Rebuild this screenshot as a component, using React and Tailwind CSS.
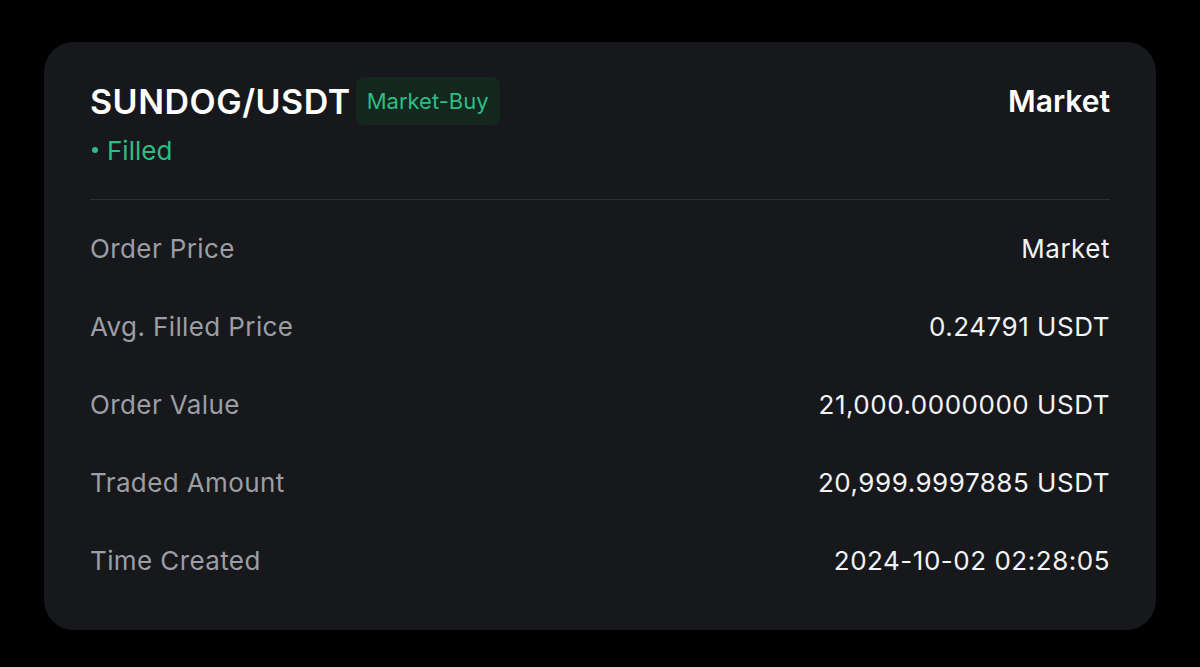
import React from "react";

const rows = [
  { label: "Order Price", value: "Market" },
  { label: "Avg. Filled Price", value: "0.24791 USDT" },
  { label: "Order Value", value: "21,000.0000000 USDT" },
  { label: "Traded Amount", value: "20,999.9997885 USDT" },
  { label: "Time Created", value: "2024-10-02 02:28:05" },
];

function DetailRow({ label, value }) {
  return (
    <div className="flex h-[78px] items-center justify-between">
      <span className="text-[26px] tracking-[0.015em] text-[#9c9ea5]">{label}</span>
      <span className="text-[26px] tracking-[0.02em] text-[#f2f3f5]">{value}</span>
    </div>
  );
}

export default function App() {
  return (
    <div
      className="min-h-screen bg-black pt-[42px] px-[44px]"
      style={{ fontFamily: "Inter, 'Noto Sans', sans-serif" }}
    >
      <div className="h-[588px] rounded-[30px] bg-[#17181c] px-[46px] pt-[35px]">
        <div className="flex h-[48px] items-center justify-between">
          <div className="flex items-center gap-[5px]">
            <h1 className="text-[34px] font-semibold tracking-[0.015em] text-white">SUNDOG/USDT</h1>
            <span className="flex h-[48px] items-center rounded-[8px] bg-[#13271f] px-[11px] text-[22px] text-[#2dbd84]">
              Market-Buy
            </span>
          </div>
          <span className="text-[30px] font-semibold text-white">Market</span>
        </div>

        <div className="mt-[7px] flex h-[36px] items-center gap-[9px] pl-[2px] text-[26px] text-[#2dbd84]">
          <span className="h-[6px] w-[6px] rounded-full bg-[#2dbd84]" />
          <span>Filled</span>
        </div>

        <div className="mt-[31px] h-px bg-[#2c2e34]" />

        <div className="mt-[9px]">
          {rows.map((r) => (
            <DetailRow key={r.label} label={r.label} value={r.value} />
          ))}
        </div>
      </div>
    </div>
  );
}
